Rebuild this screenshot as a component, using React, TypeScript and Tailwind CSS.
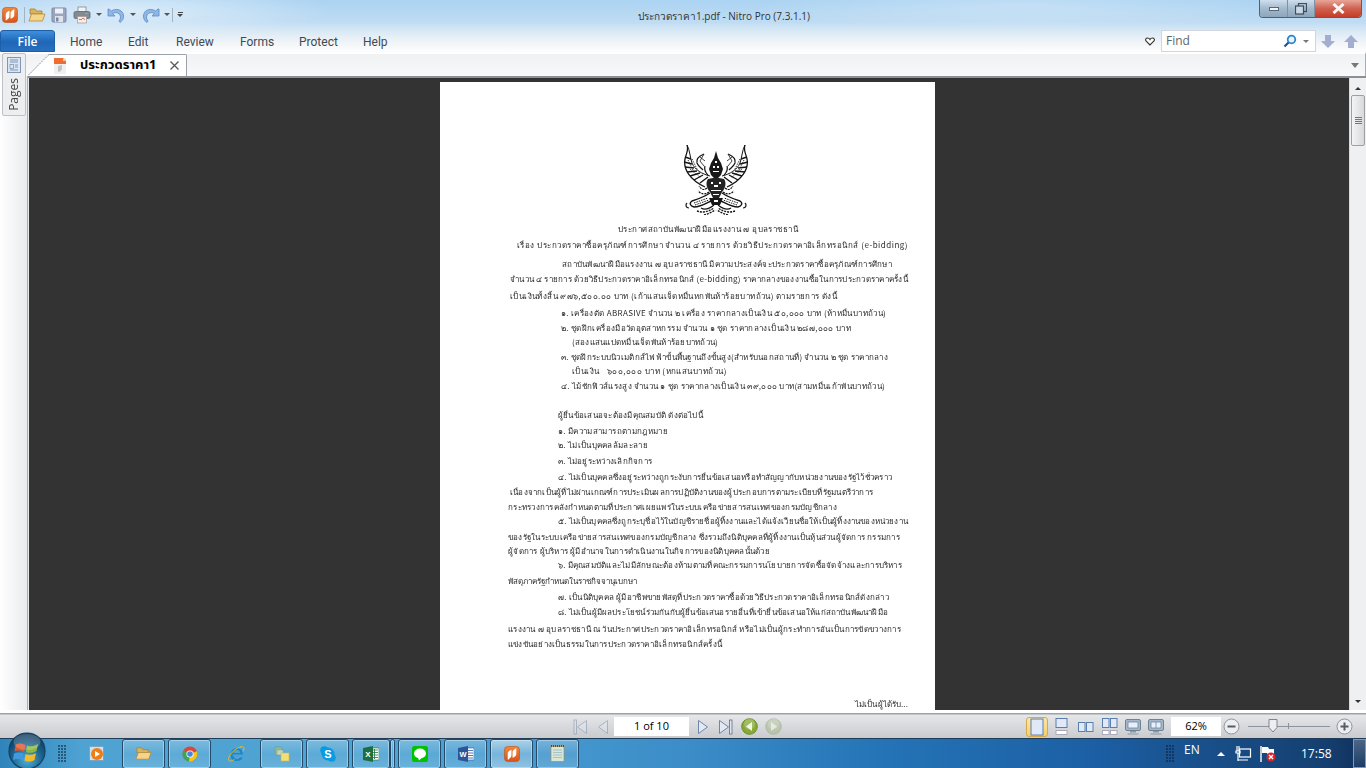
import React, { useLayoutEffect, useRef } from "react";

const sans = "font-['Open_Sans','Noto_Sans',sans-serif]";

const lines: { t: string; c: string; w: number }[] = [
  { t: "ประกาศสถาบันพัฒนาฝีมือแรงงาน ๗ อุบลราชธานี", c: "h-[16px] pl-[178px]", w: 180 },
  { t: "เรื่อง ประกวดราคาซื้อครุภัณฑ์การศึกษา จำนวน ๔ รายการ ด้วยวิธีประกวดราคาอิเล็กทรอนิกส์ (e-bidding)", c: "h-[19px] pl-[77px]", w: 391 },
  { t: "สถาบันพัฒนาฝีมือแรงงาน ๗ อุบลราชธานี มีความประสงค์จะประกวดราคาซื้อครุภัณฑ์การศึกษา", c: "h-[15px] pl-[122px]", w: 330 },
  { t: "จำนวน ๔ รายการ ด้วยวิธีประกวดราคาอิเล็กทรอนิกส์ (e-bidding) ราคากลางของงานซื้อในการประกวดราคาครั้งนี้", c: "h-[17px] pl-[70px]", w: 398 },
  { t: "เป็นเงินทั้งสิ้น ๙๗๖,๕๐๐.๐๐ บาท (เก้าแสนเจ็ดหมื่นหกพันห้าร้อยบาทถ้วน) ตามรายการ ดังนี้", c: "h-[17px] pl-[70px]", w: 327 },
  { t: "๑. เครื่องตัด ABRASIVE จำนวน ๒ เครื่อง ราคากลางเป็นเงิน ๕๐,๐๐๐ บาท (ห้าหมื่นบาทถ้วน)", c: "h-[15px] pl-[121px]", w: 325 },
  { t: "๒. ชุดฝึกเครื่องมือวัดอุตสาหกรรม จำนวน ๑ ชุด ราคากลางเป็นเงิน ๒๘๗,๐๐๐ บาท", c: "h-[14px] pl-[121px]", w: 290 },
  { t: "(สองแสนแปดหมื่นเจ็ดพันห้าร้อยบาทถ้วน)", c: "h-[15px] pl-[132px]", w: 146 },
  { t: "๓. ชุดฝึกระบบนิวเมติกส์ไฟฟ้าขั้นพื้นฐานถึงขั้นสูง(สำหรับนอกสถานที่) จำนวน ๒ ชุด ราคากลาง", c: "h-[14px] pl-[121px]", w: 327 },
  { t: "เป็นเงิน   ๖๐๐,๐๐๐ บาท (หกแสนบาทถ้วน)", c: "h-[15px] pl-[132px]", w: 155 },
  { t: "๔. ไม้ชักฟิวส์แรงสูง จำนวน ๑ ชุด ราคากลางเป็นเงิน ๓๙,๐๐๐ บาท(สามหมื่นเก้าพันบาทถ้วน)", c: "h-[29px] pl-[121px]", w: 324 },
  { t: "ผู้ยื่นข้อเสนอจะต้องมีคุณสมบัติ ดังต่อไปนี้", c: "h-[16px] pl-[118px]", w: 145 },
  { t: "๑. มีความสามารถตามกฎหมาย", c: "h-[14px] pl-[118px]", w: 110 },
  { t: "๒. ไม่เป็นบุคคลล้มละลาย", c: "h-[16px] pl-[118px]", w: 90 },
  { t: "๓. ไม่อยู่ระหว่างเลิกกิจการ", c: "h-[16px] pl-[118px]", w: 94 },
  { t: "๔. ไม่เป็นบุคคลซึ่งอยู่ระหว่างถูกระงับการยื่นข้อเสนอหรือทำสัญญากับหน่วยงานของรัฐไว้ชั่วคราว", c: "h-[15px] pl-[118px]", w: 334 },
  { t: "เนื่องจากเป็นผู้ที่ไม่ผ่านเกณฑ์การประเมินผลการปฏิบัติงานของผู้ประกอบการตามระเบียบที่รัฐมนตรีว่าการ", c: "h-[15px] pl-[70px]", w: 363 },
  { t: "กระทรวงการคลังกำหนดตามที่ประกาศเผยแพร่ในระบบเครือข่ายสารสนเทศของกรมบัญชีกลาง", c: "h-[14px] pl-[68px]", w: 329 },
  { t: "๕. ไม่เป็นบุคคลซึ่งถูกระบุชื่อไว้ในบัญชีรายชื่อผู้ทิ้งงานและได้แจ้งเวียนชื่อให้เป็นผู้ทิ้งงานของหน่วยงาน", c: "h-[16px] pl-[118px]", w: 350 },
  { t: "ของรัฐในระบบเครือข่ายสารสนเทศของกรมบัญชีกลาง ซึ่งรวมถึงนิติบุคคลที่ผู้ทิ้งงานเป็นหุ้นส่วนผู้จัดการ กรรมการ", c: "h-[14px] pl-[68px]", w: 392 },
  { t: "ผู้จัดการ ผู้บริหาร ผู้มีอำนาจในการดำเนินงานในกิจการของนิติบุคคลนั้นด้วย", c: "h-[14px] pl-[68px]", w: 262 },
  { t: "๖. มีคุณสมบัติและไม่มีลักษณะต้องห้ามตามที่คณะกรรมการนโยบายการจัดซื้อจัดจ้างและการบริหาร", c: "h-[16px] pl-[118px]", w: 344 },
  { t: "พัสดุภาครัฐกำหนดในราชกิจจานุเบกษา", c: "h-[16px] pl-[68px]", w: 129 },
  { t: "๗. เป็นนิติบุคคล ผู้มีอาชีพขายพัสดุที่ประกวดราคาซื้อด้วยวิธีประกวดราคาอิเล็กทรอนิกส์ดังกล่าว", c: "h-[15px] pl-[118px]", w: 331 },
  { t: "๘. ไม่เป็นผู้มีผลประโยชน์ร่วมกันกับผู้ยื่นข้อเสนอรายอื่นที่เข้ายื่นข้อเสนอให้แก่สถาบันพัฒนาฝีมือ", c: "h-[17px] pl-[118px]", w: 330 },
  { t: "แรงงาน ๗ อุบลราชธานี ณ วันประกาศประกวดราคาอิเล็กทรอนิกส์ หรือไม่เป็นผู้กระทำการอันเป็นการขัดขวางการ", c: "h-[15px] pl-[68px]", w: 393 },
  { t: "แข่งขันอย่างเป็นธรรมในการประกวดราคาอิเล็กทรอนิกส์ครั้งนี้", c: "h-[60px] pl-[68px]", w: 214 },
  { t: "ไม่เป็นผู้ได้รับ...", c: "h-[12px] pl-[415px]", w: 53 },
];

function FitLine({ t, c, w }: { t: string; c: string; w: number }) {
  const ref = useRef<HTMLSpanElement>(null);
  useLayoutEffect(() => {
    const el = ref.current;
    if (!el) return;
    const n = Array.from(new Intl.Segmenter("th", { granularity: "grapheme" }).segment(t)).length;
    el.style.letterSpacing = `${(w - el.getBoundingClientRect().width) / n}px`;
  }, [t, w]);
  return (
    <div className={`${c} whitespace-pre`}>
      <span ref={ref} className="inline-block">{t}</span>
    </div>
  );
}

function Garuda() {
  const half = (
    <g fill="none" stroke="#151515" strokeWidth="1">
      <path d="M4 0C6 5 3 9 2 14C0 24 7 35 22 42" strokeWidth="1.300" />
      <path d="M4 0C7 6 7 12 9 18C12 25 19 29 27 31" />
      <path d="M2 12L8 14M1 17L9 19M2 22L11 23M4 27L14 26M7 31L17 28M11 35L20 30M17 38L25 32" strokeWidth="1.400" />
      <path d="M5 15L11 27M9 14L14 24M7 24L18 33" strokeDasharray="1 1" />
      <path d="M21 9C16 11 13 14 14 18C15 21 18 23 20 25" strokeWidth="1.200" />
      <path d="M21 9L17 16L21 21M17 12L22 16" strokeWidth=".8" />
      <path d="M25 30C22 27 21 24 22 21" strokeWidth="1.200" />
      <path d="M24 43C20 46 18 44 16 41M26 47C22 50 18 49 15 46" strokeDasharray="2 1" strokeWidth="1.200" />
      <path d="M27 48C21 52 15 54 9 56C6 58 7 61 11 62C17 62 22 59 28 56" strokeWidth="1.400" />
      <path d="M11 58L25 53M12 60L26 55" strokeDasharray="1.500 1" />
      <path d="M4 58C2 60 3 63 6 63M18 63C21 65 26 64 31 60" strokeWidth="1.200" />
      <path d="M14 66C19 68 25 67 31 63M21 70C25 69 29 67 32 65" strokeDasharray="2 1" strokeWidth="1.400" />
    </g>
  );
  return (
    <svg viewBox="0 0 66 70" className="w-[66px] h-[70px] ml-[243px] blur-[0.3px]">
      {half}
      <g transform="translate(66 0) scale(-1 1)">{half}</g>
      <path d="M33 6L35 13L38 18L40 24L38 30L35 33H31L28 30L26 24L28 18L31 13Z" fill="#181818" />
      <path d="M30 21h2v2h-2zM34 21h2v2h-2zM32 16h2v2h-2zM30 26h6v1h-6z" fill="#fff" />
      <path d="M25 34C22 38 24 44 27 47L30 53H36L39 47C42 44 44 38 41 34L36 33H30Z" fill="#222" />
      <path d="M28 37h2v2h-2zM36 37h2v2h-2zM31 40h4v2h-4zM28 45h10v1h-10zM30 49h6v1h-6z" fill="#fff" />
      <path d="M26 53h14l-3 7h-8z" fill="#161616" />
      <path d="M31 55h4v2h-4z" fill="#fff" />
    </svg>
  );
}

const Folder = ({ s = 18 }: { s?: number }) => (
  <svg width={s} height={s} viewBox="0 0 18 18">
    <path d="M2 3h5l1.500 2H14v3H2z" fill="#d9b35c" stroke="#a9812f" strokeWidth=".8" />
    <path d="M1 15L3.500 8H17l-2.500 7z" fill="#f3d58e" stroke="#b48a35" strokeWidth=".8" />
  </svg>
);

const Save = () => (
  <svg width="16" height="16" viewBox="0 0 16 16">
    <rect x="1" y="1" width="14" height="14" rx="1" fill="#9aa6c0" stroke="#7c88a6" />
    <rect x="4" y="1.500" width="8" height="5" fill="#eef1f7" />
    <rect x="4" y="9" width="8" height="6" fill="#dfe3ec" />
    <rect x="5" y="10.500" width="2.500" height="4" fill="#7c88a6" />
  </svg>
);

const Printer = () => (
  <svg width="18" height="18" viewBox="0 0 18 18">
    <rect x="5" y="1" width="8" height="5" fill="#f4f4f4" stroke="#888" strokeWidth=".8" />
    <rect x="1" y="5.500" width="16" height="7" rx="1.500" fill="#808b96" stroke="#5e6871" strokeWidth=".8" />
    <rect x="12.500" y="7" width="2" height="1" fill="#7fd04e" />
    <rect x="4.500" y="10.500" width="9" height="6.500" fill="#f8ece4" stroke="#999" strokeWidth=".7" />
    <path d="M6 14c1-2 2 1 3-1s2 1 3 0" stroke="#d2553a" strokeWidth="1" fill="none" />
  </svg>
);

const Undo = ({ flip = false }: { flip?: boolean }) => (
  <svg width="18" height="18" viewBox="0 0 18 18" className={flip ? "-scale-x-100" : ""}>
    <path d="M1 3v7h7L5.600 7.600C8 6 11.500 6.500 13 9c1 2 .5 4-1 6l1 1.500c3-2 4.500-5.500 3-9C14.500 3.500 9 2 4.300 5L2 3z" fill="#8fb6e4" stroke="#5b8ccb" strokeWidth=".8" />
  </svg>
);

const Caret = ({ c = "border-t-[#555]" }: { c?: string }) => (
  <div className={`w-0 h-0 border-x-[3px] border-x-transparent border-t-[3px] ${c}`} />
);

const NitroLogo = ({ s = 15, id = "nl" }: { s?: number; id?: string }) => (
  <svg width={s} height={s} viewBox="0 0 15 15">
    <defs>
      <linearGradient id={id} x1="0" y1="0" x2="0" y2="1">
        <stop offset="0" stopColor="#f08a3c" />
        <stop offset="1" stopColor="#d9531a" />
      </linearGradient>
    </defs>
    <rect x=".5" y=".5" width="14" height="14" rx="3" fill={`url(#${id})`} stroke="#b5531e" strokeWidth=".6" />
    <path d="M3.500 13V7C3.500 5 6 4 7 3.500V9C7 10.500 5 12 3.500 13zM8 11V5.500C8 4 10.500 2.500 11.500 2V8C11.500 9.500 9.500 10.500 8 11z" fill="#fff" />
  </svg>
);

const Arrow = ({ up = false }: { up?: boolean }) => (
  <svg width="14" height="15" viewBox="0 0 14 15" className={up ? "rotate-180" : ""}>
    <path d="M4 1h6v6h4l-7 7-7-7h4z" fill="#a3add0" />
  </svg>
);

const Nav = ({ last = false, flip = false, dim = false }: { last?: boolean; flip?: boolean; dim?: boolean }) => (
  <svg width="15" height="16" viewBox="0 0 15 16" className={`${flip ? "-scale-x-100" : ""} ${dim ? "opacity-45" : ""}`}>
    <path d={last ? "M1.500 1.500L10.500 8L1.500 14.500z" : "M3.500 1.500L12.500 8L3.500 14.500z"} fill="#e3e9f2" stroke="#6f86ab" strokeWidth="1" />
    {last && <rect x="11.500" y="1" width="2.500" height="14" fill="#dfe5ef" stroke="#5c6f8e" strokeWidth=".8" />}
  </svg>
);

const Round = ({ dir, dim }: { dir: "l" | "r"; dim?: boolean }) => (
  <svg width="17" height="17" viewBox="0 0 17 17" className={dim ? "opacity-55" : ""}>
    <circle cx="8.500" cy="8.500" r="7.800" fill={dim ? "#a4b88a" : "#88a83a"} stroke={dim ? "#8fa57a" : "#6a8b26"} />
    <circle cx="8.500" cy="6" r="5.500" fill="#fff" opacity=".22" />
    <path d={dir === "l" ? "M11 4L5 8.500L11 13z" : "M6 4L12 8.500L6 13z"} fill="#f2f7e4" />
  </svg>
);

const ViewIcon = ({ kind }: { kind: number }) => {
  const f = "#dfe9f7";
  const st = "#5a7fae";
  return (
    <svg width="18" height="20" viewBox="0 0 18 20">
      {kind === 0 && <rect x="3" y="2" width="12" height="16" fill={f} stroke={st} />}
      {kind === 1 && (
        <>
          <rect x="3" y="1.500" width="11" height="9" fill={f} stroke={st} />
          <rect x="3" y="13.500" width="11" height="4" fill="#fff" stroke="#aab" />
        </>
      )}
      {kind === 2 && (
        <>
          <rect x="1.500" y="5.500" width="6.500" height="9" fill={f} stroke={st} />
          <rect x="9.500" y="5.500" width="6.500" height="9" fill={f} stroke={st} />
        </>
      )}
      {kind === 3 && (
        <>
          <rect x="1.500" y="1.500" width="6.500" height="9" fill={f} stroke={st} />
          <rect x="9.500" y="1.500" width="6.500" height="9" fill={f} stroke={st} />
          <rect x="1.500" y="13.500" width="6.500" height="4" fill="#fff" stroke="#aab" />
          <rect x="9.500" y="13.500" width="6.500" height="4" fill="#fff" stroke="#aab" />
        </>
      )}
    </svg>
  );
};

const Monitor = ({ two = false }: { two?: boolean }) => (
  <svg width="16" height="18" viewBox="0 0 16 18">
    <rect x=".5" y="1.500" width="15" height="11" rx="1.500" fill="#a9b8c6" stroke="#6f8291" />
    <rect x="3" y="4" width="10" height="6" fill="#e8eff6" stroke="#5c7ea3" strokeWidth=".7" />
    {two && <path d="M8 4v6" stroke="#5c7ea3" strokeWidth=".7" />}
    <path d="M5 13h6v1.500H5zM2.500 15.500h11v1h-11z" fill="#8c9aa6" />
  </svg>
);

const ZoomBtn = ({ plus = false }: { plus?: boolean }) => (
  <svg width="17" height="17" viewBox="0 0 17 17">
    <circle cx="8.500" cy="8.500" r="7.500" fill="#eceef1" stroke="#8d949c" />
    <path d={plus ? "M4.500 8.500h8M8.500 4.500v8" : "M4.500 8.500h8"} stroke="#565d66" strokeWidth="2" />
  </svg>
);

const Chrome = () => (
  <svg width="16" height="16" viewBox="0 0 16 16">
    <circle cx="8" cy="8" r="7.500" fill="#d9463a" />
    <path d="M8 8L1.500 4.200A7.500 7.500 0 0 0 7 15.400z" fill="#3aa757" />
    <path d="M8 8l6.900-2.800A7.500 7.500 0 0 1 7 15.400z" fill="#f5c518" />
    <circle cx="8" cy="8" r="3.600" fill="#fff" />
    <circle cx="8" cy="8" r="2.800" fill="#4a83e0" />
  </svg>
);

const IE = () => (
  <svg width="18" height="18" viewBox="0 0 18 18">
    <path d="M5 9.500h11C16 5 13 3 10 3 6.500 3 3.500 6 3.500 10s3 6 6.500 6c2.800 0 5-1.400 5.800-3.600h-3C12 13.500 11 14 10 14c-2 0-3.500-1.500-3.500-3zM6.500 8c.3-1.800 1.700-3 3.500-3s3 1.200 3.300 3z" fill="#1f87c9" />
    <path d="M15 1.500C11 2 5 6 2 12c-1 2.500-.5 4 1.500 4 1 0 2.500-.5 4-1.500" fill="none" stroke="#e8b923" strokeWidth="1" />
    <path d="M13 2.500c2.500-1.300 4.500-1 4 1.500-.2.800-.5 1.500-1 2.500" fill="none" stroke="#e8b923" strokeWidth="1" />
  </svg>
);

const Sticky = () => (
  <svg width="16" height="17" viewBox="0 0 16 17">
    <path d="M1 2h7v6H4v2H1z" fill="#8dbe8c" stroke="#6f9d7a" strokeWidth=".6" />
    <rect x="3" y="5" width="6" height="5" fill="#bcd7c2" stroke="#88a" strokeWidth=".4" />
    <rect x="7" y="8" width="8" height="8" fill="#f2df78" stroke="#cdb64e" strokeWidth=".6" />
  </svg>
);

const Skype = () => (
  <svg width="16" height="16" viewBox="0 0 16 16">
    <circle cx="4.300" cy="4.300" r="4" fill="#0a9ae0" />
    <circle cx="11.700" cy="11.700" r="4" fill="#0a9ae0" />
    <circle cx="8" cy="8" r="6.500" fill="#0a9ae0" />
    <text x="8" y="12" textAnchor="middle" fontSize="11" fontWeight="700" fill="#fff" fontFamily="Liberation Sans">S</text>
  </svg>
);

const Excel = () => (
  <svg width="16" height="16" viewBox="0 0 16 16">
    <rect x="7" y="2" width="9" height="12" fill="#fff" stroke="#1f7246" strokeWidth=".6" />
    <path d="M9 4h6M9 6.500h6M9 9h6M9 11.500h6M11.500 3v10" stroke="#1f7246" strokeWidth=".8" />
    <path d="M0 2l10-2v16L0 14z" fill="#1d6f42" />
    <text x="5" y="11" textAnchor="middle" fontSize="8" fontWeight="700" fill="#fff" fontFamily="Liberation Sans">X</text>
  </svg>
);

const LineApp = () => (
  <svg width="16" height="16" viewBox="0 0 16 16">
    <rect width="16" height="16" rx="2.500" fill="#00c300" />
    <ellipse cx="8" cy="7.500" rx="6" ry="5" fill="#fff" />
    <path d="M6 11.500l1 3 3-3z" fill="#fff" />
  </svg>
);

const Word = () => (
  <svg width="16" height="16" viewBox="0 0 16 16">
    <rect x="7" y="2" width="9" height="12" fill="#fff" stroke="#2b579a" strokeWidth=".6" />
    <path d="M10 4.500h5M10 7h5M10 9.500h5M10 12h5" stroke="#2b579a" strokeWidth=".8" />
    <path d="M0 2l10-2v16L0 14z" fill="#2b579a" />
    <text x="5" y="11" textAnchor="middle" fontSize="7.500" fontWeight="700" fill="#fff" fontFamily="Liberation Sans">W</text>
  </svg>
);

const Notepad = () => (
  <svg width="15" height="17" viewBox="0 0 15 17">
    <rect x="1" y="1.500" width="13" height="15" fill="#d9e7d7" stroke="#a98a5a" strokeWidth=".7" />
    <path d="M1 1h13" stroke="#333" strokeWidth="1.400" strokeDasharray="1 1" />
    <path d="M3 5h9M3 7.500h9M3 10h9M3 12.500h9" stroke="#8fb1bf" strokeWidth=".7" />
  </svg>
);

const TaskBtn = ({ children, c = "w-[43px]", active = false }: { children: React.ReactNode; c?: string; active?: boolean }) => (
  <div
    className={`${c} h-[30px] shrink-0 flex items-center justify-center rounded-[3px] border border-[#234a68] shadow-[inset_0_0_0_1px_rgba(255,255,255,0.35)] ${
      active
        ? "bg-[linear-gradient(to_bottom,rgba(255,255,255,0.55),rgba(255,255,255,0.25)_50%,rgba(255,255,255,0.4))]"
        : "bg-[linear-gradient(to_bottom,rgba(255,255,255,0.26),rgba(255,255,255,0.08)_50%,rgba(255,255,255,0.16))]"
    }`}
  >
    {children}
  </div>
);

const ribbonTab = "pt-[2px] text-[12px] text-[#3e4a55] font-['Roboto',sans-serif]";

export default function App() {
  return (
    <div className={`relative w-[1366px] h-[768px] overflow-hidden flex flex-col bg-[#e6e8ea] ${sans}`}>
      {/* Title + ribbon tabs */}
      <div className="h-[52px] shrink-0 flex flex-col bg-[radial-gradient(ellipse_200px_30px_at_130px_10px,rgba(255,255,255,0.5),transparent),radial-gradient(ellipse_260px_24px_at_1020px_6px,rgba(255,255,255,0.25),transparent),linear-gradient(to_bottom,#abd3f2_0px,#bfdcf3_22px,#dbeaf5_32px,#f3f6f8_44px,#fdfdfd_52px)]">
        <div className="h-[30px] shrink-0 flex items-start relative">
          <div className="flex items-center h-[30px] pl-[2px] pb-[1px]">
            <NitroLogo s={16} id="nl1" />
            <div className="w-px h-[16px] bg-[#9fb5c6] ml-[6px] mr-[3px]" />
            <Folder />
            <div className="ml-[5px]"><Save /></div>
            <div className="ml-[6px]"><Printer /></div>
            <div className="ml-[5px]"><Caret /></div>
            <div className="ml-[5px]"><Undo /></div>
            <div className="ml-[5px]"><Caret /></div>
            <div className="ml-[6px]"><Undo flip /></div>
            <div className="ml-[4px]"><Caret /></div>
            <div className="w-px h-[14px] bg-[#9fb5c6] ml-[2px] mr-[4px]" />
            <div className="flex flex-col items-center gap-px">
              <div className="w-[5px] h-px bg-[#444]" />
              <Caret c="border-t-[#444]" />
            </div>
          </div>
          <div className="absolute left-[537px] w-[374px] top-[8px] text-center text-[10px] leading-[16px] text-[#333] whitespace-nowrap">ประกวดราคา1.pdf - Nitro Pro (7.3.1.1)</div>
          <div className="ml-auto mr-[4px] flex h-[18px] rounded-b-[4px] border border-t-0 border-[#4d6274] overflow-hidden">
            <div className="w-[28px] flex items-center justify-center border-r border-[#7d93a5] bg-[linear-gradient(to_bottom,#cfdfee,#a3b9cc_50%,#8ea6bb)]">
              <div className="w-[10px] h-[4px] bg-[#f2f5f8] border border-[#56697a]" />
            </div>
            <div className="w-[27px] flex items-center justify-center border-r border-[#7d93a5] bg-[linear-gradient(to_bottom,#cfdfee,#a3b9cc_50%,#8ea6bb)]">
              <svg width="12" height="12" viewBox="0 0 12 12">
                <rect x="3.500" y=".5" width="8" height="8" fill="none" stroke="#3b4c5c" strokeWidth="1.200" />
                <rect x=".5" y="3" width="8" height="8" fill="#cbd8e3" stroke="#3b4c5c" strokeWidth="1.200" />
              </svg>
            </div>
            <div className="w-[46px] flex items-center justify-center bg-[linear-gradient(to_bottom,#e8a598,#d0614f_50%,#c63d28)]">
              <svg width="13" height="11" viewBox="0 0 13 11">
                <path d="M1.500 1L11.500 10M11.500 1L1.500 10" stroke="#f6f6f6" strokeWidth="3" />
              </svg>
            </div>
          </div>
        </div>
        <div className="h-[22px] flex items-center relative">
          <div className="w-[55px] h-[22px] pt-[1px] rounded-t-[3px] border border-[#1c5ea8] bg-[linear-gradient(to_bottom,#3f8fdc,#1f66b8_55%,#2a70c0)] text-white text-[12px] font-semibold flex items-center justify-center">File</div>
          <div className={`ml-[15px] w-[58px] ${ribbonTab}`}>Home</div>
          <div className={`w-[48px] ${ribbonTab}`}>Edit</div>
          <div className={`w-[64px] ${ribbonTab}`}>Review</div>
          <div className={`w-[59px] ${ribbonTab}`}>Forms</div>
          <div className={`w-[64px] ${ribbonTab}`}>Protect</div>
          <div className={ribbonTab}>Help</div>
          <div className="ml-auto flex items-center">
            <svg width="10" height="9" viewBox="0 0 10 9" className="mr-[6px]">
              <path d="M5 8L1 4C0 2.500 1 1 2.500 1 3.500 1 4.500 1.500 5 2.500 5.500 1.500 6.500 1 7.500 1 9 1 10 2.500 9 4z" fill="#fff" stroke="#333" strokeWidth="1.100" />
            </svg>
            <div className="w-[155px] h-[22px] bg-white border border-[#cfd6dd] flex items-center pl-[4px] pr-[5px] text-[12px] text-[#5c6670]">
              <span>Find</span>
              <svg width="14" height="14" viewBox="0 0 14 14" className="ml-auto">
                <circle cx="8.500" cy="5.500" r="3.800" fill="#e6f3fb" stroke="#2b86cc" strokeWidth="1.800" />
                <path d="M5.500 8.500L1.500 12.500" stroke="#1f4e96" strokeWidth="2.200" />
              </svg>
              <div className="ml-[6px] mr-[1px]"><Caret c="border-t-[#777]" /></div>
            </div>
            <div className="ml-[5px]"><Arrow /></div>
            <div className="ml-[9px] mr-[8px]"><Arrow up /></div>
          </div>
        </div>
      </div>

      {/* Tab strip */}
      <div className="h-[24px] shrink-0 flex relative border-t-2 border-white bg-[linear-gradient(to_bottom,#f0f1f3,#f8f9fa)] border-r border-r-[#a8adb3]">
        <div className="w-[28px] shrink-0" />
        <svg width="21" height="22" viewBox="0 0 21 22" className="shrink-0">
          <path d="M21 0V22H0z" fill="#fff" />
          <path d="M21 0.500L0 21.500" stroke="#8b9199" strokeWidth="1" strokeDasharray="2 1" />
        </svg>
        <div className="w-[138px] h-[22px] bg-white border-t border-r border-[#9ba1a8] rounded-tr-[2px] flex items-center">
          <svg width="12" height="16" viewBox="0 0 12 16" className="ml-[5px]">
            <rect width="12" height="16" fill="#f0f0f0" />
            <path d="M0 0h9l3 3v3H0z" fill="#ef6d32" />
            <path d="M9 0v3h3z" fill="#f9c4a8" />
            <path d="M4 8l4-1v4l-1 2-3 1z" fill="#c4c4c4" />
          </svg>
          <div className="ml-[14px] pt-[1px] font-['Noto_Sans_Thai','Tahoma','Liberation_Sans','Noto_Sans',sans-serif] text-[13px] font-bold text-black whitespace-nowrap">ประกวดราคา1</div>
          <svg width="9" height="9" viewBox="0 0 9 9" className="ml-auto mr-[7px]">
            <path d="M.5.500l8 8M8.500.500l-8 8" stroke="#555" strokeWidth="1.200" />
          </svg>
        </div>
        <div className="ml-auto mr-[6px] mt-[9px] w-0 h-0 border-x-[4px] border-x-transparent border-t-[5px] border-t-[#777]" />
      </div>

      {/* Main */}
      <div className="flex-1 min-h-0 flex">
        <div className="w-[27px] shrink-0 bg-[linear-gradient(to_right,#fff,#e9ebee)]" />
        <div className="flex-1 min-w-0 flex flex-col border-l border-[#a8adb2]">
          <div className="h-[2px] shrink-0 bg-[#8c9094]" />
          <div className="flex-1 min-h-0 flex ml-[1px]">
            <div className="flex-1 min-w-0 bg-[#333333] pt-[4px] pl-[411px] overflow-hidden">
              <div className="w-[495px] h-[628px] bg-white overflow-hidden font-['Noto_Sans_CJK_SC','DejaVu_Sans',sans-serif] text-[8px] text-[#2a2a2a] leading-[12px]">
                <div className="pt-[63px]"><Garuda /></div>
                <div className="mt-[8px] blur-[0.3px]">
                  {lines.map((l, i) => (
                    <FitLine key={i} t={l.t} c={l.c} w={l.w} />
                  ))}
                </div>
              </div>
            </div>
            <div className="w-[17px] shrink-0 bg-[#eef0f2] border-l border-[#d8dadd] flex flex-col items-center">
              <div className="h-[17px] flex items-center justify-center pt-[4px]">
                <div className="w-0 h-0 border-x-[3px] border-x-transparent border-b-[3px] border-b-[#333]" />
              </div>
              <div className="w-[14px] h-[51px] rounded-[2px] border border-[#9aa0a6] bg-[linear-gradient(to_right,#f4f4f5,#d8d9db)] flex flex-col items-center justify-center gap-[1px]">
                <div className="w-[7px] h-px bg-[#777]" />
                <div className="w-[7px] h-px bg-[#777]" />
                <div className="w-[7px] h-px bg-[#777]" />
                <div className="w-[7px] h-px bg-[#777]" />
              </div>
              <div className="mt-auto h-[17px] flex items-center justify-center">
                <div className="w-0 h-0 border-x-[3px] border-x-transparent border-t-[3px] border-t-[#333]" />
              </div>
            </div>
          </div>
        </div>
      </div>

      {/* Status bar */}
      <div className="h-[28px] shrink-0 relative flex items-center border-t-[3px] border-t-white bg-[linear-gradient(to_bottom,#9aa3ab_0px,#9aa3ab_1px,#e6e7e9_2px,#c9cbcf_100%)]">
        <div className="ml-[573px] flex items-center pt-[2px]">
          <Nav last flip dim />
          <div className="ml-[8px]"><Nav flip dim /></div>
          <div className="ml-[3px] w-[75px] h-[19px] bg-white text-[11px] text-black flex items-center justify-center">1 of 10</div>
          <div className="ml-[6px]"><Nav /></div>
          <div className="ml-[8px]"><Nav last /></div>
          <div className="ml-[8px]"><Round dir="l" /></div>
          <div className="ml-[7px]"><Round dir="r" dim /></div>
        </div>
        <div className="ml-auto flex items-center pt-[2px] mr-[13px]">
          <div className="w-[22px] h-[20px] rounded-[3px] border border-[#d7a94a] bg-[linear-gradient(to_bottom,#fce7a8,#f6cf6b)] flex items-center justify-center"><ViewIcon kind={0} /></div>
          <div className="ml-[3px] w-[22px] flex justify-center"><ViewIcon kind={1} /></div>
          <div className="ml-[2px] w-[22px] flex justify-center"><ViewIcon kind={2} /></div>
          <div className="ml-[2px] w-[22px] flex justify-center"><ViewIcon kind={3} /></div>
          <div className="ml-[1px] w-[22px] flex justify-center"><Monitor /></div>
          <div className="ml-[1px] w-[22px] flex justify-center"><Monitor two /></div>
          <div className="ml-[4px] w-[50px] h-[19px] bg-white text-[11px] text-black flex items-center justify-center">62%</div>
          <div className="ml-[2px]"><ZoomBtn /></div>
          <div className="ml-[8px] w-[82px] h-[17px] relative flex items-center">
            <div className="w-full h-px bg-[#8d949c]" />
            <div className="absolute left-[40px] top-[5px] w-px h-[6px] bg-[#8d949c]" />
            <svg width="10" height="14" viewBox="0 0 10 14" className="absolute left-[20px] top-[1px]">
              <path d="M1 .5h8v8L5 13 1 8.500z" fill="#eceef1" stroke="#7f868e" />
            </svg>
          </div>
          <div className="ml-[6px]"><ZoomBtn plus /></div>
        </div>
      </div>

      {/* Taskbar */}
      <div className="h-[30px] shrink-0 flex items-center border-t border-t-[#1f3d58] bg-[linear-gradient(to_right,#2f84bb_0%,#4ea3d3_6%,#4ea3d3_30%,#3c8dc8_50%,#2473b6_65%,#1c5fa4_80%,#153f70_97%,#10305a_100%)]">
        <div className="w-[122px] shrink-0 flex items-center relative">
          <div className="ml-[58px] grid grid-cols-3 gap-[1px] opacity-70">
            {Array.from({ length: 18 }).map((_, i) => (
              <div key={i} className="w-[2px] h-[2px] bg-[#1c3d5a]" />
            ))}
          </div>
          <div className="ml-[23px] w-[15px] h-[15px] bg-[#cfe0f0] border border-[#7da2c4] flex items-center justify-center">
            <div className="w-[12px] h-[12px] rounded-full bg-[#ee7d13] flex items-center justify-center">
              <div className="w-0 h-0 border-y-[3px] border-y-transparent border-l-[5px] border-l-white ml-px" />
            </div>
          </div>
        </div>
        <TaskBtn><Folder s={17} /></TaskBtn>
        <div className="ml-[3px]"><TaskBtn><Chrome /></TaskBtn></div>
        <div className="w-[49px] shrink-0 flex justify-center"><IE /></div>
        <TaskBtn><Sticky /></TaskBtn>
        <div className="ml-[3px]"><TaskBtn><Skype /></TaskBtn></div>
        <div className="ml-[3px]"><TaskBtn c="w-[38px]"><Excel /></TaskBtn></div>
        <TaskBtn c="w-[5px]"><span /></TaskBtn>
        <div className="ml-[3px]"><TaskBtn><LineApp /></TaskBtn></div>
        <div className="ml-[3px]"><TaskBtn><Word /></TaskBtn></div>
        <div className="ml-[3px]"><TaskBtn active><NitroLogo s={16} id="nl2" /></TaskBtn></div>
        <div className="ml-[3px]"><TaskBtn><Notepad /></TaskBtn></div>
        <div className="ml-auto flex items-center h-full text-white">
          <div className="grid grid-cols-3 gap-[1px] opacity-60 mr-[10px]">
            {Array.from({ length: 18 }).map((_, i) => (
              <div key={i} className="w-[2px] h-[2px] bg-[#0e2540]" />
            ))}
          </div>
          <div className="w-[32px] text-[12px] leading-none pb-[8px]">EN</div>
          <div className="ml-[1px] w-0 h-0 border-x-[4px] border-x-transparent border-b-[4px] border-b-white" />
          <svg width="17" height="17" viewBox="0 0 17 17" className="ml-[10px]">
            <rect x="4.500" y="4" width="11" height="8" fill="none" stroke="#fff" strokeWidth="1.200" />
            <path d="M2 1v5M4 1v5M1 6h4v2H1zM3 8v8M3 15h10" stroke="#fff" strokeWidth="1.200" fill="none" />
          </svg>
          <svg width="16" height="18" viewBox="0 0 16 18" className="ml-[8px]">
            <path d="M1 1v16" stroke="#fff" strokeWidth="1.400" />
            <path d="M2 2h6l1 2h5v6H8l-1-2H2z" fill="#fff" />
            <circle cx="11" cy="12" r="4.500" fill="#d8242b" />
            <path d="M9 10l4 4M13 10l-4 4" stroke="#fff" strokeWidth="1.300" />
          </svg>
          <div className="ml-[25px] w-[44px] text-[12px]">17:58</div>
          <div className="ml-[8px] w-[13px] h-full border border-[#7f9ab5] bg-[linear-gradient(to_bottom,rgba(255,255,255,0.25),rgba(255,255,255,0.05))]" />
        </div>
      </div>

      {/* Sidebar tab, over the strip and the rail */}
      <div className="absolute left-[2px] top-[53px] w-[24px] h-[63px] rounded-[2px] border border-[#bcc2c8] bg-[#eceef0] flex flex-col items-center">
        <svg width="14" height="16" viewBox="0 0 14 16" className="mt-[3px]">
          <rect x=".5" y=".5" width="13" height="15" fill="#dce6f2" stroke="#7f97b5" />
          <path d="M3 3h8M3 5h8" stroke="#7f97b5" />
          <rect x="3" y="7.500" width="3.500" height="4" fill="none" stroke="#7f97b5" strokeWidth=".8" />
          <path d="M8 8h3M8 10h3M3 13h8" stroke="#7f97b5" />
        </svg>
        <div className="mt-[5px] [writing-mode:vertical-rl] rotate-180 text-[12px] leading-[14px] text-[#444]">Pages</div>
      </div>

      {/* Start orb */}
      <svg width="38" height="38" viewBox="0 0 38 38" className="absolute left-[8px] top-[732px]">
        <defs>
          <radialGradient id="orb" cx="50%" cy="75%" r="70%">
            <stop offset="0" stopColor="#4fb0dc" />
            <stop offset=".6" stopColor="#1c628f" />
            <stop offset="1" stopColor="#0f3a5c" />
          </radialGradient>
        </defs>
        <circle cx="19" cy="19" r="18" fill="url(#orb)" stroke="#17405f" strokeWidth="1.200" />
        <path d="M7.500 13C10 11 14 11 17.500 13L16 20C13 18 9.500 18 6.500 19.500z" fill="#e2572b" />
        <path d="M19 13.500C22 15 26 14.500 30 12L28.500 19C25 21 21.500 21.500 18 20z" fill="#8cbb3c" />
        <path d="M6 21.500C9 20 13 20 15.500 21.500L14.500 28C11.500 26.500 8 26.500 5 28z" fill="#3f9ae0" />
        <path d="M17.500 22C21 23.500 24.500 23 28 21L26.500 28C23 30 19.500 30 16.500 28.500z" fill="#f2bb2a" />
        <ellipse cx="19" cy="10" rx="13.500" ry="8" fill="#fff" opacity=".2" />
      </svg>
    </div>
  );
}
